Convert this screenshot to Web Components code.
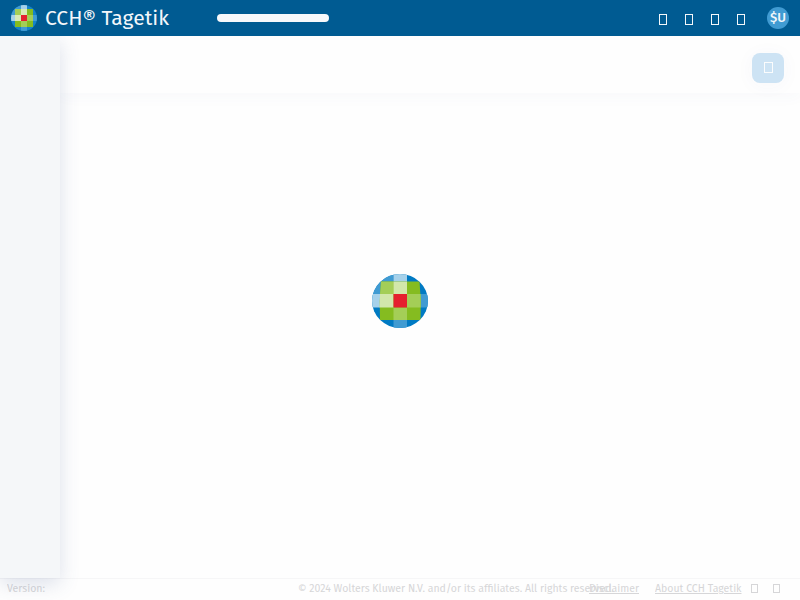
<!DOCTYPE html>
<html lang="en"><head><meta charset="utf-8"><title>CCH Tagetik</title>
<style>html,body{margin:0;height:100%;overflow:hidden;background:#fefefe;font-family:"Fira Sans","Noto Sans","Open Sans",sans-serif}</style></head>
<body><tagetik-app></tagetik-app>
<script>
const define=(name,html,init)=>customElements.define(name,class extends HTMLElement{
  connectedCallback(){
    if(this.shadowRoot)return;
    const t=document.createElement('template');t.innerHTML=html;
    this.attachShadow({mode:'open'}).append(t.content.cloneNode(true));
    if(init)init(this,this.shadowRoot);
  }});

// Brand globe: a five by five mosaic clipped to a circle
define('brand-globe',`<style>:host{display:block;width:56px;height:54px;flex:none}svg{display:block;width:100%;height:100%}</style>
<svg viewBox="0 0 56 54" preserveAspectRatio="none"><defs><clipPath id="c"><ellipse cx="28" cy="27" rx="28" ry="27"/></clipPath></defs>
<g clip-path="url(#c)"><rect width="56" height="54" fill="#007ac3"/>
<path fill="#409bd2" d="M0 0H21.5V7.5H9L8 20H0zM48 20H56V33.5H48zM21.5 46H35V54H21.5z"/>
<path fill="#a6d1ea" d="M21.5 0H35V7.5H21.5zM0 20H8V33.5H0z"/>
<path fill="#85bc20" d="M9 7.5H47.5Q49.5 27 48.5 46H8Q7 27 9 7.5z"/>
<path fill="#a4ce57" d="M9 7.5H21.5V20H8zM35 20H48.6V33.5H35zM21.5 33.5H35V46H21.5z"/>
<path fill="#d2e7ab" d="M21.5 7.5H35V20H21.5zM8 20H21.5V33.5H7.6z"/>
<path fill="#e5202e" d="M21.5 20H35V33.5H21.5z"/></g></svg>`);

// Compact globe on a pixel grid, for the header
define('brand-globe-small',`<style>:host{display:block;width:26px;height:26px;flex:none}svg{display:block}</style>
<svg width="26" height="26" viewBox="0 0 26 26"><defs><clipPath id="c"><circle cx="13" cy="13" r="13"/></clipPath></defs>
<g clip-path="url(#c)"><rect width="26" height="26" fill="#1583c9"/>
<path fill="#409bd2" d="M0 0H10V4H4V10H0zM22 10H26V16H22zM10 22H16V26H10z"/>
<path fill="#a6d1ea" d="M10 0H16V4H10zM0 10H4V16H0z"/>
<path fill="#85bc20" d="M4 4H22V22H4z"/>
<path fill="#a4ce57" d="M4 4H10V10H4zM16 10H22V16H16zM10 16H16V22H10z"/>
<path fill="#d8eab7" d="M10 4H16V10H10zM4 10H10V16H4z"/>
<path fill="#e5202e" d="M10 10H16V16H10z"/></g></svg>`);

// Text whose glyphs are condensed or widened to the given width
define('fit-text',`<style>:host{display:block;white-space:nowrap;flex:none}span{display:inline-block;transform-origin:0 50%}</style><span><slot></slot></span>`,
(host,root)=>{const s=root.querySelector('span'),w=+host.getAttribute('width');host.style.width=w+'px';
  s.style.transform='scaleX('+w/s.getBoundingClientRect().width+')';});

define('glyph-box',`<style>:host{display:block;box-sizing:border-box;flex:none;width:8px;height:11px;border:1px solid currentColor}</style>`);

define('top-bar',`<style>:host{display:flex;align-items:center;box-sizing:border-box;height:36px;background:#005b92;color:#f3f7fa;padding:0 11px;position:relative;z-index:3}
.name{font-size:21px;line-height:36px;margin-left:8px}
.bar{width:112px;height:8px;border-radius:4px;background:#f7f9fb;margin-left:48px}
nav{display:flex;gap:18px;margin:3px 22px 0 auto}
.user{display:grid;place-items:center;width:22px;height:22px;border-radius:50%;background:#409bd2;font-size:13.5px;font-weight:500;line-height:22px}</style>
<brand-globe-small></brand-globe-small><fit-text class="name" width="124">CCH® Tagetik</fit-text><div class="bar"></div>
<nav><glyph-box></glyph-box><glyph-box></glyph-box><glyph-box></glyph-box><glyph-box></glyph-box></nav>
<div class="user"><fit-text width="16">$U</fit-text></div>`);

define('side-rail',`<style>:host{display:block;width:60px;background:#f5f7f9;box-shadow:0 6px 20px rgba(66,89,145,.18);flex:none;position:relative;z-index:2}</style>`);

define('tool-strip',`<style>:host{display:flex;justify-content:flex-end;box-sizing:border-box;height:57px;padding:17px 16px 0 0;background:#fefefe;box-shadow:0 4px 14px rgba(66,89,145,.03)}
.button{display:grid;place-items:center;width:32px;height:30px;border-radius:8px;background:#cde3f4;color:#fbfcfd;box-shadow:0 2px 20px rgba(66,89,145,.04)}
glyph-box{width:9px;height:11px;margin-top:-1px}</style><div class="button"><glyph-box></glyph-box></div>`);

define('page-footer',`<style>:host{display:flex;box-sizing:border-box;height:22px;border-top:1px solid #f6f6f7;padding-left:7px;font-size:10.5px;line-height:20px;color:#d6d6d8}
.copy{margin-left:253px}.dis{margin-left:-25px}.about{margin-left:16px}
glyph-box{width:7px;height:9px;margin:5px 0 0 9px}glyph-box+glyph-box{margin-left:15px}</style>
<fit-text width="38">Version:</fit-text><fit-text class="copy" width="316">© 2024 Wolters Kluwer N.V. and/or its affiliates. All rights reserved.</fit-text>
<fit-text class="dis" width="50"><u>Disclaimer</u></fit-text><fit-text class="about" width="86.5"><u>About CCH Tagetik</u></fit-text><glyph-box></glyph-box><glyph-box></glyph-box>`);

define('loading-mark',`<style>:host{display:grid;place-items:center;position:absolute;inset:0;padding-top:2px;box-sizing:border-box;z-index:4}</style><brand-globe></brand-globe>`);

define('tagetik-app',`<style>:host{display:flex;flex-direction:column;height:600px;width:800px;position:relative;overflow:hidden}
main{display:flex;flex:1;min-height:0}section{flex:1;min-width:0}</style>
<top-bar></top-bar><main><side-rail></side-rail><section><tool-strip></tool-strip></section></main><page-footer></page-footer><loading-mark></loading-mark>`);
</script></body></html>
